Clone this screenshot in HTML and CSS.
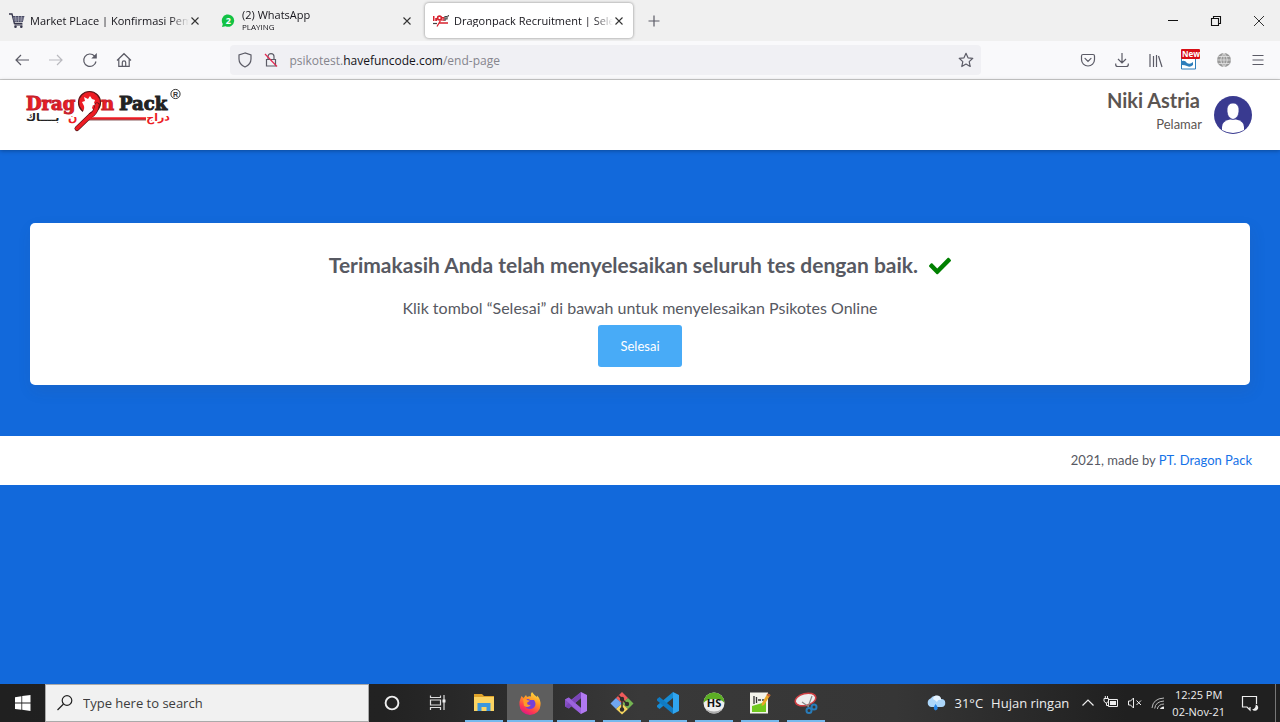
FILE: index.html
```html
<!DOCTYPE html>
<html lang="id">
<head>
<meta charset="utf-8">
<title>Dragonpack Recruitment | Selesai</title>
<link rel="stylesheet" href="styles.css">
</head>
<body>
<div class="tabs">
  <div class="tab">
    <svg class="favicon" width="16" height="16" viewBox="0 0 16 16"><path d="M0 1h3l2.400 9.500h8" fill="none" stroke="#34344a" stroke-width="1.300"/><path d="M3.500 3h12l-1.700 6H5z" fill="#4a4c66"/><path d="M6.500 3l.6 6M9.500 3v6M12.500 3l-.6 6M4 5h11M4.500 7h10" stroke="#b9bac8" stroke-width=".6"/><path d="M5.500 12h8" stroke="#34344a"/><circle cx="6.500" cy="13.800" r="1.300" fill="#34344a"/><circle cx="12.300" cy="13.800" r="1.300" fill="#34344a"/></svg>
    <span class="tab-title">Market PLace | Konfirmasi Pemb</span>
    <button class="tab-close" aria-label="Close tab"><svg width="10" height="10" viewBox="0 0 10 10"><path d="M1.500 1.500l7 7M8.500 1.500l-7 7"/></svg></button>
  </div>
  <div class="tab">
    <svg class="favicon" width="16" height="16" viewBox="0 0 16 16"><path d="M1 14l.8-3A6.200 6.200 0 1 1 4.500 13.300z" fill="#12c244"/><text x="7.300" y="11.300" text-anchor="middle" class="badge-text">2</text></svg>
    <span class="tab-title">(2) WhatsApp<small>PLAYING</small></span>
    <button class="tab-close" aria-label="Close tab"><svg width="10" height="10" viewBox="0 0 10 10"><path d="M1.500 1.500l7 7M8.500 1.500l-7 7"/></svg></button>
  </div>
  <div class="tab tab-active">
    <svg class="favicon" width="16" height="16" viewBox="0 0 16 16"><path d="M0 3h1.500v5H0zM2.200 5h2v3h-2z" fill="#d8232e"/><circle cx="6.500" cy="5" r="1.900" fill="none" stroke="#d8232e" stroke-width="1.600"/><path d="M9 8V4.500h1.800V8" fill="none" stroke="#d8232e" stroke-width="1.200"/><path d="M12 8V3.500h2V6h-2M15.300 2v1.500" fill="none" stroke="#444" stroke-width="1.200"/><path d="M6 10h9M7.500 7.500l-3.500 6" stroke="#d8232e" stroke-width="1.300"/><path d="M0 10.500h4" stroke="#444" stroke-width="1.200"/></svg>
    <span class="tab-title">Dragonpack Recruitment | Seles</span>
    <button class="tab-close" aria-label="Close tab"><svg width="10" height="10" viewBox="0 0 10 10"><path d="M1.500 1.500l7 7M8.500 1.500l-7 7"/></svg></button>
  </div>
  <button class="new-tab" aria-label="New tab"><svg width="12" height="12" viewBox="0 0 12 12"><path d="M6 .5v11M.5 6h11" stroke="#5b5b66" stroke-width="1.200"/></svg></button>
  <div class="window-controls">
    <button aria-label="Minimize"><svg width="12" height="12" viewBox="0 0 12 12"><path d="M1 5.500h10" stroke="#111"/></svg></button>
    <button aria-label="Restore"><svg width="12" height="12" viewBox="0 0 12 12"><path d="M1.500 3.500h7v7h-7zM3.500 3.500v-2h7v7h-2" fill="none" stroke="#111" stroke-width="1.100"/></svg></button>
    <button aria-label="Close"><svg width="12" height="12" viewBox="0 0 12 12"><path d="M1 1l10 10M11 1L1 11" stroke="#333"/></svg></button>
  </div>
</div>

<div class="toolbar">
  <div class="nav-buttons">
    <button aria-label="Back"><svg class="line" width="16" height="16" viewBox="0 0 16 16"><path d="M15 8H2M7 3L2 8l5 5"/></svg></button>
    <button aria-label="Forward" disabled><svg class="line" width="16" height="16" viewBox="0 0 16 16"><path d="M1 8h13M9 3l5 5-5 5"/></svg></button>
    <button aria-label="Reload"><svg class="line" width="16" height="16" viewBox="0 0 16 16"><path d="M14 9.500A6.200 6.200 0 1 1 12.500 4L13.500 5"/><path d="M14.800 1v5.500H9.300z" fill="#5b5b66" stroke="none"/></svg></button>
    <button aria-label="Home"><svg class="line" width="16" height="16" viewBox="0 0 16 16"><path d="M1 8.500L8 1.700l7 6.800M2.800 7v7.300h10.400V7M6.300 14v-3.500a1.700 1.700 0 0 1 3.400 0V14"/></svg></button>
  </div>
  <div class="address">
    <svg class="line" width="16" height="16" viewBox="0 0 16 16"><path d="M8 1L2 3v4c0 4 2.500 6.500 6 8 3.500-1.500 6-4 6-8V3z"/></svg>
    <svg class="line" width="16" height="16" viewBox="0 0 16 16"><path d="M3.500 7.500h9V14h-9zM5 7.500V4.600a3 3 0 0 1 6 0v2.900"/><path d="M2 2l12 12.500" stroke="#e22850"/></svg>
    <div class="url">psikotest.<b>havefuncode.com</b>/end-page</div>
    <button aria-label="Bookmark"><svg class="line" width="16" height="16" viewBox="0 0 16 16"><path d="M8 1.300l2 4.500 4.800.5-3.600 3.300 1 4.900L8 12l-4.200 2.500 1-4.900L1.200 6.300 6 5.800z" stroke-linejoin="round"/></svg></button>
  </div>
  <div class="tools">
    <button aria-label="Pocket"><svg class="line" width="16" height="16" viewBox="0 0 16 16"><path d="M3 2.500h10q1.500 0 1.500 1.500v3.500a6.500 6.500 0 0 1-13 0V4q0-1.500 1.500-1.500zM5 6.300l3 3 3-3" stroke-linecap="round"/></svg></button>
    <button aria-label="Downloads"><svg class="line" width="16" height="16" viewBox="0 0 16 16"><path d="M8 1v9.500M4 7l4 4 4-4M1.700 11.500v1q0 2 2 2h8.600q2 0 2-2v-1"/></svg></button>
    <button aria-label="Library"><svg class="line" width="16" height="16" viewBox="0 0 16 16"><path d="M2 2v13M5.500 4v11M8.500 3v12M10.500 4l3.500 11"/></svg></button>
    <button aria-label="Extension, new"><svg width="20" height="22" viewBox="0 0 20 22"><path d="M1.500 3h14v17h-14z" fill="#fff" stroke="#2c7dbb"/><path d="M2 12q3-1 5 2 3 2 6-1v3q-3 3-6 1-2-1-5-1z" fill="#2c7dbb"/><rect x="1" y="0" width="19" height="10" rx="1" fill="#d70f16"/><text x="2" y="8" class="new-text">New</text></svg></button>
    <button aria-label="Web"><svg width="16" height="16" viewBox="0 0 16 16"><circle cx="8" cy="8" r="7" fill="#999"/><path d="M8 1v14M1 8h14M2.500 4.500h11M2.500 11.500h11M8 1Q1.500 8 8 15M8 1q6.500 7 0 14" fill="none" stroke="#e4e4e4" stroke-width=".8"/></svg></button>
    <button aria-label="Menu"><svg class="line" width="16" height="16" viewBox="0 0 16 16"><path d="M2.500 3.500h11M2.500 8h11M2.500 12.500h11"/></svg></button>
  </div>
</div>

<div class="page">
  <header class="site-header">
    <a class="logo" href="#" aria-label="Dragon Pack">
      <svg width="160" height="48" viewBox="0 0 160 48">
        <text x="1" y="23" class="logo-word logo-red">Drag</text>
        <text x="76" y="23" class="logo-word logo-red">n</text>
        <text x="94" y="23" class="logo-word logo-black">Pack</text>
        <circle cx="64.500" cy="15.500" r="11" fill="#ed1c24" stroke="#5a1519" stroke-width="1.200"/>
        <path d="M56 27q4-4 3-8l-2-4 3-1-1-4 4 2 2-3 2 3 3 1-1 3 3 3-4-1-1 3 2 3q-4 0-6 4l-5 3z" fill="#fff"/>
        <path d="M72 18q-1 8-7 11L52 41.500" fill="none" stroke="#4d1517" stroke-width="5" stroke-linecap="round"/>
        <path d="M72 18q-1 8-7 11L52 41.500" fill="none" stroke="#ed1c24" stroke-width="3.800" stroke-linecap="round"/>
        <path d="M62 31.500h59" stroke="#ed1c24" stroke-width="2.400"/>
        <path d="M64 33h57" stroke="#5a1519" stroke-width=".7"/>
        <text x="145" y="34" text-anchor="end" direction="ltr" class="logo-arabic logo-red">دراج</text>
        <text x="43" y="34" class="logo-arabic logo-red">ن</text>
        <text x="1" y="34" class="logo-arabic logo-black">بــــاك</text>
        <circle cx="150.500" cy="7" r="4.600" fill="#fff" stroke="#333"/>
        <text x="150.500" y="9.500" text-anchor="middle" class="logo-mark">R</text>
      </svg>
    </a>
    <div class="user">
      <div class="user-text"><strong>Niki Astria</strong><span>Pelamar</span></div>
      <svg width="38" height="38" viewBox="0 0 38 38"><circle cx="19" cy="19" r="19" fill="#393a90"/><path d="M8 34V31q0-6 8-7.500h6q8 1.500 8 7.500v3q-11 6-22 0z" fill="#fff"/><path d="M19 7c-4 0-6 3-6 7s1 8 6 9.500c5-1.500 6-5.500 6-9.500s-2-7-6-7z" fill="#fff" stroke="#393a90" stroke-width=".8"/></svg>
    </div>
  </header>
  <main class="content">
    <section class="card">
      <h1>Terimakasih Anda telah menyelesaikan seluruh tes dengan baik. <svg width="22" height="22" viewBox="0 0 512 512"><path fill="green" d="M173.900 439.400l-166.400-166.400c-10-10-10-26.200 0-36.200l36.200-36.200c10-10 26.200-10 36.200 0L192 312.700 432.100 72.600c10-10 26.200-10 36.200 0l36.200 36.200c10 10 10 26.200 0 36.200L210.100 439.400c-10 10-26.200 10-36.200 0z"/></svg></h1>
      <p>Klik tombol “Selesai” di bawah untuk menyelesaikan Psikotes Online</p>
      <button class="finish">Selesai</button>
    </section>
  </main>
  <footer class="site-footer"><span>2021, made by <a href="#">PT. Dragon Pack</a></span></footer>
</div>

<div class="taskbar">
  <button class="start" aria-label="Start"><svg width="16" height="16" viewBox="0 0 16 16"><path d="M0 2.200L6.400 1.200v6.400H0zM7.200 1.100L15.500 0v7.600H7.200zM0 8.400h6.400v6.400L0 13.900zM7.200 8.400h8.300V16l-8.300-1.200z" fill="#fff"/></svg></button>
  <label class="search"><svg width="18" height="18" viewBox="0 0 18 18"><circle cx="10" cy="6.500" r="4.800" fill="none" stroke="#222" stroke-width="1.200"/><path d="M6.500 10L.5 16" stroke="#222" stroke-width="1.300"/></svg><input type="text" placeholder="Type here to search" aria-label="Type here to search"></label>
  <div class="apps">
    <button aria-label="Cortana"><svg width="24" height="24" viewBox="0 0 24 24"><circle cx="12" cy="12" r="6.400" fill="none" stroke="#eee" stroke-width="1.900"/></svg></button>
    <button aria-label="Task view"><svg width="24" height="24" viewBox="0 0 24 24"><path d="M4.500 4.500v2h10v-2M4.500 19v-2.500h10V19M4.500 9h10v5h-10zM18 4v15" fill="none" stroke="#ddd" stroke-width="1.200"/><path d="M16.500 8.500h3v3h-3z" fill="#eee"/></svg></button>
    <button class="running" aria-label="File Explorer"><svg width="24" height="24" viewBox="0 0 24 24"><path d="M2 3h8l2 2h10v4H2z" fill="#dfa32a"/><path d="M2 6h20v14H2z" fill="#fcd462"/><path d="M5.500 20v-8h13v8h-4v-4h-5v4z" fill="#3c97dd"/></svg></button>
    <button class="running active" aria-label="Firefox"><svg width="24" height="24" viewBox="0 0 24 24"><defs><linearGradient id="fx" x1=".8" y1="0" x2=".3" y2="1"><stop offset="0" stop-color="#ffe544"/><stop offset=".4" stop-color="#ff9525"/><stop offset=".75" stop-color="#ff3a4f"/><stop offset="1" stop-color="#d9168c"/></linearGradient></defs><path d="M2 9l1.500-4 2 2L8 4l1 2q2-1 4-.5Q12 3 14 1q2 3 5 5l.3-1.500Q23 9 22.500 14A10.500 10 0 0 1 1.500 14Q1 11 2 9z" fill="url(#fx)"/><path d="M8 9q2-2 4 0h4q3 4 0 7.500-4 3-8 0Q6 14 7 11z" fill="#7540d8"/><path d="M5 8q3-1 4 1l3 .8-3 2q0 3 4 2-3 4-7 1z" fill="#ff9a26"/></svg></button>
    <button class="running" aria-label="Visual Studio"><svg width="24" height="24" viewBox="0 0 24 24"><path d="M17 1l6 3v16l-6 3z" fill="#b179f1"/><path d="M17 1v6L5 17.500 1 15.500v-7l4-2L17 17v6L5 13.500l-2 2V8.500l2 2z" fill="#8751c4"/><path d="M17 1v6L4.500 17.500 1 15.500z" fill="#7a45b8"/><path d="M1 8.500l3.500-2L17 17v6z" fill="#9b63dc"/></svg></button>
    <button class="running" aria-label="Git"><svg width="24" height="24" viewBox="0 0 24 24"><path d="M12 1l6 6-6 6-6-6z" fill="#ef5b5b"/><path d="M18 7l5.500 5.500L18 18l-6-5.500z" fill="#73b452"/><path d="M6 7l6 5.500L6 18 .5 12.500z" fill="#70a6ef"/><path d="M12 12.500l6 5.500-6 5.500L6 18z" fill="#f4d45f"/><path d="M8.500 4.500L12 8v11M12 8l4.500 4.500" stroke="#302c2a" stroke-width="1.500" fill="none"/><circle cx="12" cy="8" r="2.200" fill="#302c2a"/><circle cx="12" cy="18.500" r="2.200" fill="#302c2a"/><circle cx="17" cy="13" r="2.200" fill="#302c2a"/></svg></button>
    <button class="running" aria-label="Visual Studio Code"><svg width="24" height="24" viewBox="0 0 24 24"><path d="M17 1v6L3.500 18 1 16v-1.500z" fill="#168bd3"/><path d="M3.500 6L1 8v1.500L17 23v-6z" fill="#107bc3"/><path d="M17 1l6 3v16l-6 3z" fill="#30a5ef"/></svg></button>
    <button class="running" aria-label="HeidiSQL"><svg width="24" height="24" viewBox="0 0 24 24"><circle cx="12" cy="12" r="10.500" fill="#eee"/><path d="M1.500 12a10.500 10.500 0 0 1 21 0q-3-4-10.500-4T1.500 12z" fill="#5cae24"/><path d="M4 18q8 5 16 0-3 4.500-8 4.500T4 18z" fill="#aaa"/><text x="12" y="16" text-anchor="middle" class="hs-text">HS</text></svg></button>
    <button class="running" aria-label="Text editor"><svg width="24" height="24" viewBox="0 0 24 24"><path d="M2 1.500h18v21H2z" fill="#f4f4ea"/><path d="M4 15l14-4v10H4z" fill="#70c91f"/><path d="M6 5v8M8.500 6v6M10 9h3M14 9h2" stroke="#333" stroke-width="1.300"/><path d="M19.500 2.500l3 1.500-6.500 10-2.500 1 .5-3z" fill="#e9a827"/><path d="M19.500 2.500l3 1.500-1 2-3-2z" fill="#bd5c37"/></svg></button>
    <button class="running" aria-label="Snipping Tool"><svg width="24" height="24" viewBox="0 0 24 24"><ellipse cx="11.500" cy="8.500" rx="10.500" ry="6" fill="#eee" stroke="#cf3f43" stroke-width="1.500" transform="rotate(-14 11.500 8.500)"/><path d="M8 11l7 5M18 5l-4 11" stroke="#888" stroke-width="1.200"/><circle cx="20" cy="16" r="2.500" fill="none" stroke="#287cba" stroke-width="2"/><circle cx="15" cy="19.500" r="2.500" fill="none" stroke="#287cba" stroke-width="2"/></svg></button>
  </div>
  <div class="tray">
    <div class="weather"><svg width="20" height="18" viewBox="0 0 20 18"><path d="M5 13a4.500 4.500 0 0 1-.5-8.500A6 6 0 0 1 15 5a4 4 0 0 1 .5 8z" fill="#acd6fa"/><path d="M7 5a4 4 0 0 1 8 1q-3-1-4 2-2-2-4-3z" fill="#e7f4ff"/><path d="M9.500 10q4.500 5 0 6.500Q6 15 9.500 10z" fill="#2584e6"/></svg><span>31°C</span><span>Hujan ringan</span></div>
    <div class="status">
      <svg width="14" height="14" viewBox="0 0 14 14"><path d="M1.500 9.500L7 4l5.500 5.500" fill="none" stroke="#eee" stroke-width="1.200"/></svg>
      <svg width="16" height="14" viewBox="0 0 16 14"><path d="M5.500 3.500h9v7h-9z" fill="none" stroke="#eee"/><path d="M7 5h6v4H7z" fill="#eee"/><path d="M1 2.500h4.500V5q-1 2-2.300 2T1 5zM2.300 0v3M4.500 0v3M3.500 7v2.500H5" stroke="#eee" fill="none"/></svg>
      <svg width="16" height="14" viewBox="0 0 16 14"><path d="M1.500 5v4h2l3 3V2l-3 3zM9.500 4.500l4.500 4.500M14 4.500L9.500 9" fill="none" stroke="#eee"/></svg>
      <svg width="14" height="14" viewBox="0 0 14 14"><path d="M1 12Q2 2.500 13 2M3.700 12.500Q4.500 5.500 13 5M6.300 13q1-4.800 6.700-5" fill="none" stroke="#bbb"/><path d="M9 13q.5-2 4-2.500V13z" fill="#eee"/></svg>
    </div>
    <div class="clock"><span>12:25 PM</span><span>02-Nov-21</span></div>
    <button class="notify" aria-label="Notifications"><svg width="18" height="18" viewBox="0 0 18 18"><path d="M15.500 10V2.500H1.500v10.500H6l3 3v-3" fill="none" stroke="#eee" stroke-width="1.200"/><path d="M14.800 10.500a3.200 3.200 0 1 1-3.600 4.700q3.300 0 3.600-4.700z" fill="#eee"/></svg></button>
  </div>
</div>
</body>
</html>
```
FILE: styles.css
```css
* { box-sizing: border-box; }
body { margin: 0; min-height: 100vh; display: flex; flex-direction: column; font-family: "Open Sans", "Noto Sans", sans-serif; color: #15141a; }
button { border: 0; padding: 0; background: none; font: inherit; color: inherit; display: flex; align-items: center; justify-content: center; }
svg { flex: none; }

.tabs { height: 41px; background: #f0f0f0; display: flex; align-items: center; gap: 4px; padding-left: 1px; font-size: 11px; }
.tab { width: 208px; height: 35px; display: flex; align-items: center; padding: 0 8px; border-radius: 4px; }
.tab-active { background: #fff; box-shadow: 0 0 3px rgba(0, 0, 0, .45); }
.favicon { margin-right: 5px; }
.tab-title { flex: 1; min-width: 0; overflow: hidden; white-space: nowrap; line-height: 13px; mask-image: linear-gradient(to right, #000 88%, transparent); }
.tab-title small { display: block; font-size: 8px; line-height: 12px; }
.tab-close { width: 12px; height: 16px; }
.tab-close svg path { stroke: #333; stroke-width: 1.1; }
.badge-text { font: bold 9px "Open Sans", sans-serif; fill: #fff; }
.new-tab { width: 34px; height: 34px; }
.window-controls { margin-left: auto; display: flex; }
.window-controls button { width: 43px; height: 40px; }

.toolbar { min-height: 39px; background: #f9f9fb; border-bottom: 1px solid #ccc; display: flex; align-items: center; }
.line { fill: none; stroke: #5b5b66; stroke-width: 1.2; }
.nav-buttons { display: flex; width: 18%; padding-left: 5px; }
.nav-buttons button { width: 34px; height: 32px; }
.nav-buttons button:disabled { opacity: .4; }
.address { flex: 1; height: 30px; display: flex; align-items: center; gap: 10px; padding: 0 7px; border-radius: 4px; background: #f0f0f4; }
.url { flex: 1; font-size: 12px; color: #85858d; }
.url b { font-weight: 400; color: #15141a; }
.tools { display: flex; width: 299px; justify-content: flex-end; padding-right: 5px; }
.tools button { width: 34px; height: 32px; }
.new-text { font: bold 8px "Open Sans", sans-serif; fill: #fff; }

.page { flex: 1; background: #1269db; font-family: Lato, sans-serif; color: #575962; }
.site-header { height: 70px; position: relative; display: flex; align-items: center; justify-content: space-between; padding: 0 28px 0 25px; background: #fff; box-shadow: 0 1px 4px rgba(0, 0, 0, .3); }
.logo { display: flex; padding-bottom: 8px; }
.logo-word { font: bold 18px "DejaVu Serif", serif; stroke-width: 1px; }
.logo-arabic { font: bold 11px "DejaVu Sans", sans-serif; stroke-width: 0; }
.logo-red { fill: #ed1c24; stroke: #c5202a; }
.logo-black { fill: #222; stroke: #222; }
.logo-mark { font: bold 7px "Liberation Sans", sans-serif; fill: #333; }
.user { display: flex; align-items: center; gap: 12px; }
.user-text { display: flex; flex-direction: column; text-align: right; color: #5b5552; padding-bottom: 8px; }
.user-text strong { font-size: 20px; line-height: 26px; padding-right: 2px; }
.user-text span { font-size: 13px; line-height: 22px; }
.content { padding: 73px 30px 51px; }
.card { background: #fff; border-radius: 5px; padding: 28px 20px 18px; display: flex; flex-direction: column; align-items: center; text-align: center; box-shadow: 2px 6px 15px rgba(69, 65, 78, .1); }
.card h1 { margin: 0 0 16px; font-size: 21px; line-height: 28px; }
.card h1 svg { margin-left: 6px; vertical-align: -4px; }
.card p { margin: 0 0 4px; font-size: 16px; line-height: 26px; }
.finish { background: #48abf7; color: #fff; border-radius: 3px; padding: 10px 22px; font-size: 13px; line-height: 22px; }
.site-footer { background: #fff; padding: 14px 28px; display: flex; justify-content: flex-end; font-size: 13px; line-height: 21px; }
.site-footer a { color: #1572e8; text-decoration: none; }

.taskbar { height: 38px; display: flex; color: #eee; background: linear-gradient(to right, #202020, #222 30%, #393939 50%, #363636 70%, #202020 88%); font-size: 13px; }
.start { width: 45px; }
.search { width: 324px; display: flex; align-items: center; gap: 8px; padding-left: 11px; background: #f1f1f1; border: 1px solid #aaa; }
.search input { flex: 1; min-width: 0; border: 0; background: none; padding: 0; font: inherit; outline: 0; }
.search input::placeholder { color: #3c3c3c; opacity: 1; }
.apps { display: flex; }
.apps button { width: 46px; border: solid transparent; border-width: 0 4px; }
.apps .running { background: linear-gradient(#76b9ed, #76b9ed) bottom / 100% 2px no-repeat padding-box; }
.apps .active { border-width: 0; background: linear-gradient(#76b9ed, #76b9ed) bottom / 100% 2px no-repeat #5e5e5e; }
.tray { margin-left: auto; display: flex; align-items: center; }
.weather { display: flex; align-items: center; gap: 8px; margin-right: 12px; }
.status { display: flex; align-items: center; gap: 8px; margin-right: 7px; }
.clock { display: flex; flex-direction: column; align-items: center; font-size: 11px; line-height: 17px; }
.notify { width: 51px; height: 38px; border-right: 1px solid #777; margin-right: 4px; }
.hs-text { font: bold 11px "Open Sans", sans-serif; fill: #111; }
```
